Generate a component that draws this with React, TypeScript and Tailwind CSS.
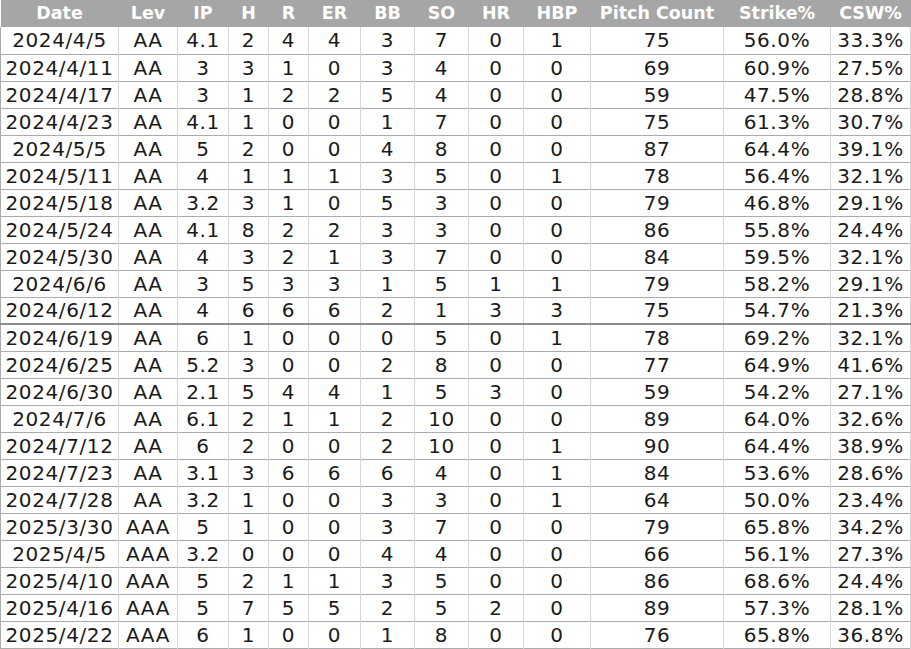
import React from 'react';

const cols = ['Date', 'Lev', 'IP', 'H', 'R', 'ER', 'BB', 'SO', 'HR', 'HBP', 'Pitch Count', 'Strike%', 'CSW%'];
const widths = ['w-[118px]', 'w-[59px]', 'w-[51px]', 'w-[40px]', 'w-[40px]', 'w-[52px]', 'w-[54px]', 'w-[54px]', 'w-[55px]', 'w-[67px]', 'w-[133px]', 'w-[107px]', 'w-[80px]'];

const rows: string[][] = [
    ['2024/4/5', 'AA', '4.1', '2', '4', '4', '3', '7', '0', '1', '75', '56.0%', '33.3%'],
    ['2024/4/11', 'AA', '3', '3', '1', '0', '3', '4', '0', '0', '69', '60.9%', '27.5%'],
    ['2024/4/17', 'AA', '3', '1', '2', '2', '5', '4', '0', '0', '59', '47.5%', '28.8%'],
    ['2024/4/23', 'AA', '4.1', '1', '0', '0', '1', '7', '0', '0', '75', '61.3%', '30.7%'],
    ['2024/5/5', 'AA', '5', '2', '0', '0', '4', '8', '0', '0', '87', '64.4%', '39.1%'],
    ['2024/5/11', 'AA', '4', '1', '1', '1', '3', '5', '0', '1', '78', '56.4%', '32.1%'],
    ['2024/5/18', 'AA', '3.2', '3', '1', '0', '5', '3', '0', '0', '79', '46.8%', '29.1%'],
    ['2024/5/24', 'AA', '4.1', '8', '2', '2', '3', '3', '0', '0', '86', '55.8%', '24.4%'],
    ['2024/5/30', 'AA', '4', '3', '2', '1', '3', '7', '0', '0', '84', '59.5%', '32.1%'],
    ['2024/6/6', 'AA', '3', '5', '3', '3', '1', '5', '1', '1', '79', '58.2%', '29.1%'],
    ['2024/6/12', 'AA', '4', '6', '6', '6', '2', '1', '3', '3', '75', '54.7%', '21.3%'],
    ['2024/6/19', 'AA', '6', '1', '0', '0', '0', '5', '0', '1', '78', '69.2%', '32.1%'],
    ['2024/6/25', 'AA', '5.2', '3', '0', '0', '2', '8', '0', '0', '77', '64.9%', '41.6%'],
    ['2024/6/30', 'AA', '2.1', '5', '4', '4', '1', '5', '3', '0', '59', '54.2%', '27.1%'],
    ['2024/7/6', 'AA', '6.1', '2', '1', '1', '2', '10', '0', '0', '89', '64.0%', '32.6%'],
    ['2024/7/12', 'AA', '6', '2', '0', '0', '2', '10', '0', '1', '90', '64.4%', '38.9%'],
    ['2024/7/23', 'AA', '3.1', '3', '6', '6', '6', '4', '0', '1', '84', '53.6%', '28.6%'],
    ['2024/7/28', 'AA', '3.2', '1', '0', '0', '3', '3', '0', '1', '64', '50.0%', '23.4%'],
    ['2025/3/30', 'AAA', '5', '1', '0', '0', '3', '7', '0', '0', '79', '65.8%', '34.2%'],
    ['2025/4/5', 'AAA', '3.2', '0', '0', '0', '4', '4', '0', '0', '66', '56.1%', '27.3%'],
    ['2025/4/10', 'AAA', '5', '2', '1', '1', '3', '5', '0', '0', '86', '68.6%', '24.4%'],
    ['2025/4/16', 'AAA', '5', '7', '5', '5', '2', '5', '2', '0', '89', '57.3%', '28.1%'],
    ['2025/4/22', 'AAA', '6', '1', '0', '0', '1', '8', '0', '0', '76', '65.8%', '36.8%'],
];

const App: React.FC = () => {
    return (
        <div className="w-[911px] h-[649px] bg-white overflow-hidden" style={{ fontFamily: '"DejaVu Sans", Verdana, sans-serif' }}>
            <table className="table-fixed border-collapse w-[911px]">
                <colgroup>
                    {widths.map((w, i) => (
                        <col key={i} className={w} />
                    ))}
                </colgroup>
                <thead>
                    <tr className="h-[27px] bg-[#a6a6a6]">
                        {cols.map((c) => (
                            <th key={c} className="p-0 text-center text-[17.5px] font-bold text-white leading-none whitespace-nowrap">
                                {c}
                            </th>
                        ))}
                    </tr>
                </thead>
                <tbody>
                    {rows.map((r, i) => (
                        <tr key={i} className={`h-[27px] border-b ${i === 10 ? 'border-b-2 border-[#8c8c8c]' : 'border-[#ababab]'}`}>
                            {r.map((v, j) => (
                                <td
                                    key={j}
                                    className="p-0 text-center text-[20px] tracking-[0.6px] text-[#1a1a1a] leading-none whitespace-nowrap border-l border-r border-l-[#d6d6d6] border-r-[#d6d6d6] first:border-l-[#ababab]"
                                >
                                    {v}
                                </td>
                            ))}
                        </tr>
                    ))}
                </tbody>
            </table>
        </div>
    );
};

export default App;
